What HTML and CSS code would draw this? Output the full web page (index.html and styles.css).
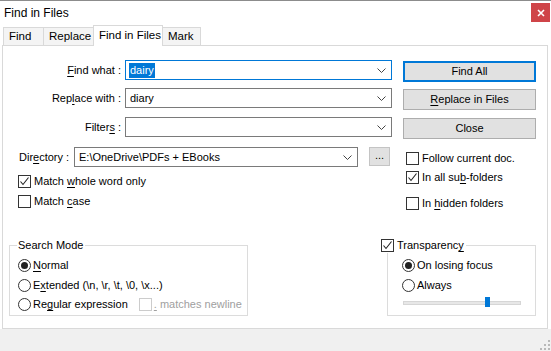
FILE: index.html
```html
<!DOCTYPE html>
<html>
<head>
<meta charset="utf-8">
<link rel="stylesheet" href="styles.css">
</head>
<body>
<div class="window">
  <div class="titlebar">
    <span class="title">Find in Files</span>
    <span class="close"><svg width="8" height="8" viewBox="0 0 8 8"><path d="M1 1L7 7M7 1L1 7" stroke="#fff" stroke-width="1.6"/></svg></span>
  </div>
  <div class="tabs">
    <span class="tab w-find">Find</span>
    <span class="tab w-rep">Replace</span>
    <span class="tab active w-fif">Find in Files</span>
    <span class="tab w-mark">Mark</span>
  </div>
  <div class="panel">
    <div class="top">
      <div class="form">
        <div class="row">
          <span class="lbl"><u>F</u>ind what :</span>
          <div class="combo focus"><span class="txt"><span class="sel">dairy</span></span><svg class="chev" width="9" height="5" viewBox="0 0 9 5"><path d="M0.5 0.5L4.5 4.5L8.5 0.5" fill="none" stroke="#444" stroke-width="1"/></svg></div>
        </div>
        <div class="row r2">
          <span class="lbl">Rep<u>l</u>ace with :</span>
          <div class="combo"><span class="txt">diary</span><svg class="chev" width="9" height="5" viewBox="0 0 9 5"><path d="M0.5 0.5L4.5 4.5L8.5 0.5" fill="none" stroke="#444" stroke-width="1"/></svg></div>
        </div>
        <div class="row r3">
          <span class="lbl">Filter<u>s</u> :</span>
          <div class="combo"><span class="txt"></span><svg class="chev" width="9" height="5" viewBox="0 0 9 5"><path d="M0.5 0.5L4.5 4.5L8.5 0.5" fill="none" stroke="#444" stroke-width="1"/></svg></div>
        </div>
        <div class="row rdir">
          <span class="lbl-dir">Dir<u>e</u>ctory :</span>
          <div class="combo cdir"><span class="txt">E:\OneDrive\PDFs + EBooks</span><svg class="chev" width="9" height="5" viewBox="0 0 9 5"><path d="M0.5 0.5L4.5 4.5L8.5 0.5" fill="none" stroke="#444" stroke-width="1"/></svg></div>
          <span class="dots">...</span>
        </div>
        <div class="check c1"><span class="box"><svg width="11" height="11" viewBox="0 0 11 11"><path d="M1.5 5.5L4 8.5L9.5 1.5" fill="none" stroke="#222" stroke-width="1.1"/></svg></span><span class="ctext">Match <u>w</u>hole word only</span></div>
        <div class="check c2"><span class="box"></span><span class="ctext">Match <u>c</u>ase</span></div>
      </div>
      <div class="side">
        <div class="btn primary">Find All</div>
        <div class="btn b2"><u>R</u>eplace in Files</div>
        <div class="btn b3">Close</div>
        <div class="check s1"><span class="box"></span><span class="ctext">Follow current doc.</span></div>
        <div class="check s2"><span class="box"><svg width="11" height="11" viewBox="0 0 11 11"><path d="M1.5 5.5L4 8.5L9.5 1.5" fill="none" stroke="#222" stroke-width="1.1"/></svg></span><span class="ctext">In all su<u>b</u>-folders</span></div>
        <div class="check s3"><span class="box"></span><span class="ctext">In <u>h</u>idden folders</span></div>
      </div>
    </div>
    <div class="groups">
      <div class="group gsearch">
        <div class="gtitle">Search Mode</div>
        <div class="radio rd1"><span class="circ on"></span><span class="ctext"><u>N</u>ormal</span></div>
        <div class="radio rd2"><span class="circ"></span><span class="ctext">E<u>x</u>tended (\n, \r, \t, \0, \x...)</span></div>
        <div class="radio rd3"><span class="circ"></span><span class="ctext">Re<u>g</u>ular expression</span><span class="dis"><span class="box dbox"></span><span class="ctext"><u>.</u> matches newline</span></span></div>
      </div>
      <div class="group gtrans">
        <div class="gtitle tt"><span class="box"><svg width="11" height="11" viewBox="0 0 11 11"><path d="M1.5 5.5L4 8.5L9.5 1.5" fill="none" stroke="#222" stroke-width="1.1"/></svg></span><span class="ctext">Transparenc<u>y</u></span></div>
        <div class="radio tr1"><span class="circ on"></span><span class="ctext">On losing focus</span></div>
        <div class="radio tr2"><span class="circ"></span><span class="ctext">Always</span></div>
        <div class="slider"><span class="thumb"></span></div>
      </div>
    </div>
  </div>
  <div class="footer">
    <svg class="grip" width="10" height="10" viewBox="0 0 10 10"><g fill="#b8b8b8"><rect x="8" y="0" width="2" height="2"/><rect x="4" y="4" width="2" height="2"/><rect x="8" y="4" width="2" height="2"/><rect x="0" y="8" width="2" height="2"/><rect x="4" y="8" width="2" height="2"/><rect x="8" y="8" width="2" height="2"/></g></svg>
  </div>
</div>
</body>
</html>
```

FILE: styles.css
```css
* { box-sizing: border-box; }
html, body { margin: 0; padding: 0; }
body {
  width: 551px;
  height: 351px;
  overflow: hidden;
  font-family: "Liberation Sans", Arial, sans-serif;
  font-size: 11px;
  color: #000;
  background: #fff;
}
u { text-decoration: underline; text-underline-offset: 2px; text-decoration-thickness: 1px; }
.window { width: 551px; height: 351px; display: flex; flex-direction: column; background: #fff; }

.titlebar {
  height: 25px;
  border-top: 1px solid #8c8c8c;
  display: flex;
  align-items: flex-start;
  justify-content: space-between;
  padding-left: 4px;
}
.title { line-height: 24px; font-size: 12px; }
.close {
  width: 19px; height: 19px;
  margin-top: 2px; margin-right: 1px;
  background: #cf4448;
  display: flex; align-items: center; justify-content: center;
}

.tabs {
  height: 20px;
  display: flex;
  align-items: flex-end;
  padding-left: 3px;
  position: relative;
  z-index: 2;
}
.tab {
  height: 18px;
  border: 1px solid #d9d9d9;
  border-bottom: none;
  background: #f4f4f4;
  line-height: 17px;
  padding-left: 5px;
  margin-right: -1px;
  font-size: 11.5px;
  white-space: nowrap;
}
.w-find { width: 41px; }
.w-rep { width: 51px; }
.w-fif { width: 70px; }
.w-mark { width: 39px; padding-left: 5px; }
.tab.active {
  height: 21px;
  margin-bottom: -1px;
  background: #fff;
  line-height: 19px;
  position: relative;
}

.panel {
  height: 284px;
  margin: 0 3px 0 2px;
  border: 1px solid #d9d9d9;
  background: #fff;
  display: flex;
  flex-direction: column;
}
.footer {
  flex: 1;
  background: #f0f0f0;
  display: flex;
  justify-content: flex-end;
  align-items: flex-end;
  padding: 0 1px 1px 0;
}

.top { display: flex; height: 164px; }
.form { width: 389px; padding-top: 14px; display: flex; flex-direction: column; }
.row { display: flex; align-items: center; height: 20px; }
.r2 { margin-top: 8px; }
.r3 { margin-top: 9px; }
.rdir { margin-top: 10px; padding-left: 16px; }
.lbl { width: 122px; text-align: right; padding-right: 4px; white-space: nowrap; }
.lbl-dir { width: 55px; white-space: nowrap; }
.combo {
  width: 267px; height: 20px;
  border: 1px solid #7a7a7a;
  background: #fff;
  display: flex; align-items: center; justify-content: space-between;
  padding: 0 5px 0 4px;
}
.combo.focus { border-color: #0078d7; }
.cdir { width: 284px; }
.txt { white-space: nowrap; line-height: 16px; }
.sel { background: #0078d7; color: #fff; padding: 0 1px; display: inline-block; line-height: 15px; margin-left: -1px; }
.chev { flex: none; }
.dots {
  margin-left: 11px;
  width: 21px; height: 19px;
  align-self: flex-start;
  background: #e1e1e1;
  border: 1px solid #c4c4c4;
  text-align: center;
  line-height: 15px;
}

.check { display: flex; align-items: center; height: 13px; white-space: nowrap; line-height: 13px; }
.ctext { white-space: pre; }
.box {
  width: 13px; height: 13px; flex: none;
  border: 1px solid #333;
  background: #fff;
  margin-right: 3px;
  display: flex; align-items: center; justify-content: center;
}
.c1 { margin-top: 8px; padding-left: 15px; }
.c2 { margin-top: 7px; padding-left: 15px; }

.side { width: 133px; margin-left: 11px; padding-top: 15px; display: flex; flex-direction: column; }
.btn {
  height: 21px;
  background: #e1e1e1;
  border: 1px solid #adadad;
  text-align: center;
  line-height: 19px;
}
.btn.primary { border: 2px solid #0078d7; line-height: 17px; }
.b2 { margin-top: 7px; }
.b3 { margin-top: 8px; }
.s1 { margin-top: 13px; padding-left: 3px; }
.s2 { margin-top: 6px; padding-left: 3px; }
.s3 { margin-top: 13px; padding-left: 3px; }

.groups { display: flex; margin-top: 35px; }
.group {
  border: 1px solid #dcdcdc;
  height: 71px;
  display: flex; flex-direction: column;
}
.gsearch { width: 239px; margin-left: 6px; padding-left: 8px; }
.gtrans { width: 149px; margin-left: 139px; padding-left: 14px; }
.gtitle {
  width: max-content;
  margin-top: -9px;
  margin-left: -1px;
  padding: 0 2px 0 1px;
  background: #fff;
  line-height: 16px;
  height: 16px;
  white-space: nowrap;
}
.tt { display: flex; align-items: center; margin-left: -21px; padding-left: 0; }

.radio { display: flex; align-items: center; height: 13px; white-space: nowrap; line-height: 13px; }
.circ {
  width: 13px; height: 13px; flex: none;
  border: 1px solid #333;
  border-radius: 50%;
  margin-right: 2px;
  display: flex; align-items: center; justify-content: center;
}
.circ.on::after { content: ""; width: 7px; height: 7px; border-radius: 50%; background: #222; }
.rd1 { margin-top: 6px; }
.rd2 { margin-top: 7px; }
.rd3 { margin-top: 6px; }
.dis { display: flex; align-items: center; margin-left: 11px; color: #a0a0a0; }
.dbox { border-color: #cccccc; margin-right: 2px; }
.tr1 { margin-top: 6px; }
.tr2 { margin-top: 7px; }
.slider {
  position: relative;
  width: 118px; height: 4px;
  margin-top: 9px; margin-left: 1px;
  background: #e7e7e7;
  border: 1px solid #d6d6d6;
}
.thumb {
  position: absolute;
  left: 81px; top: -5px;
  width: 5px; height: 10px;
  background: #0078d7;
}
.grip { display: block; }
```
